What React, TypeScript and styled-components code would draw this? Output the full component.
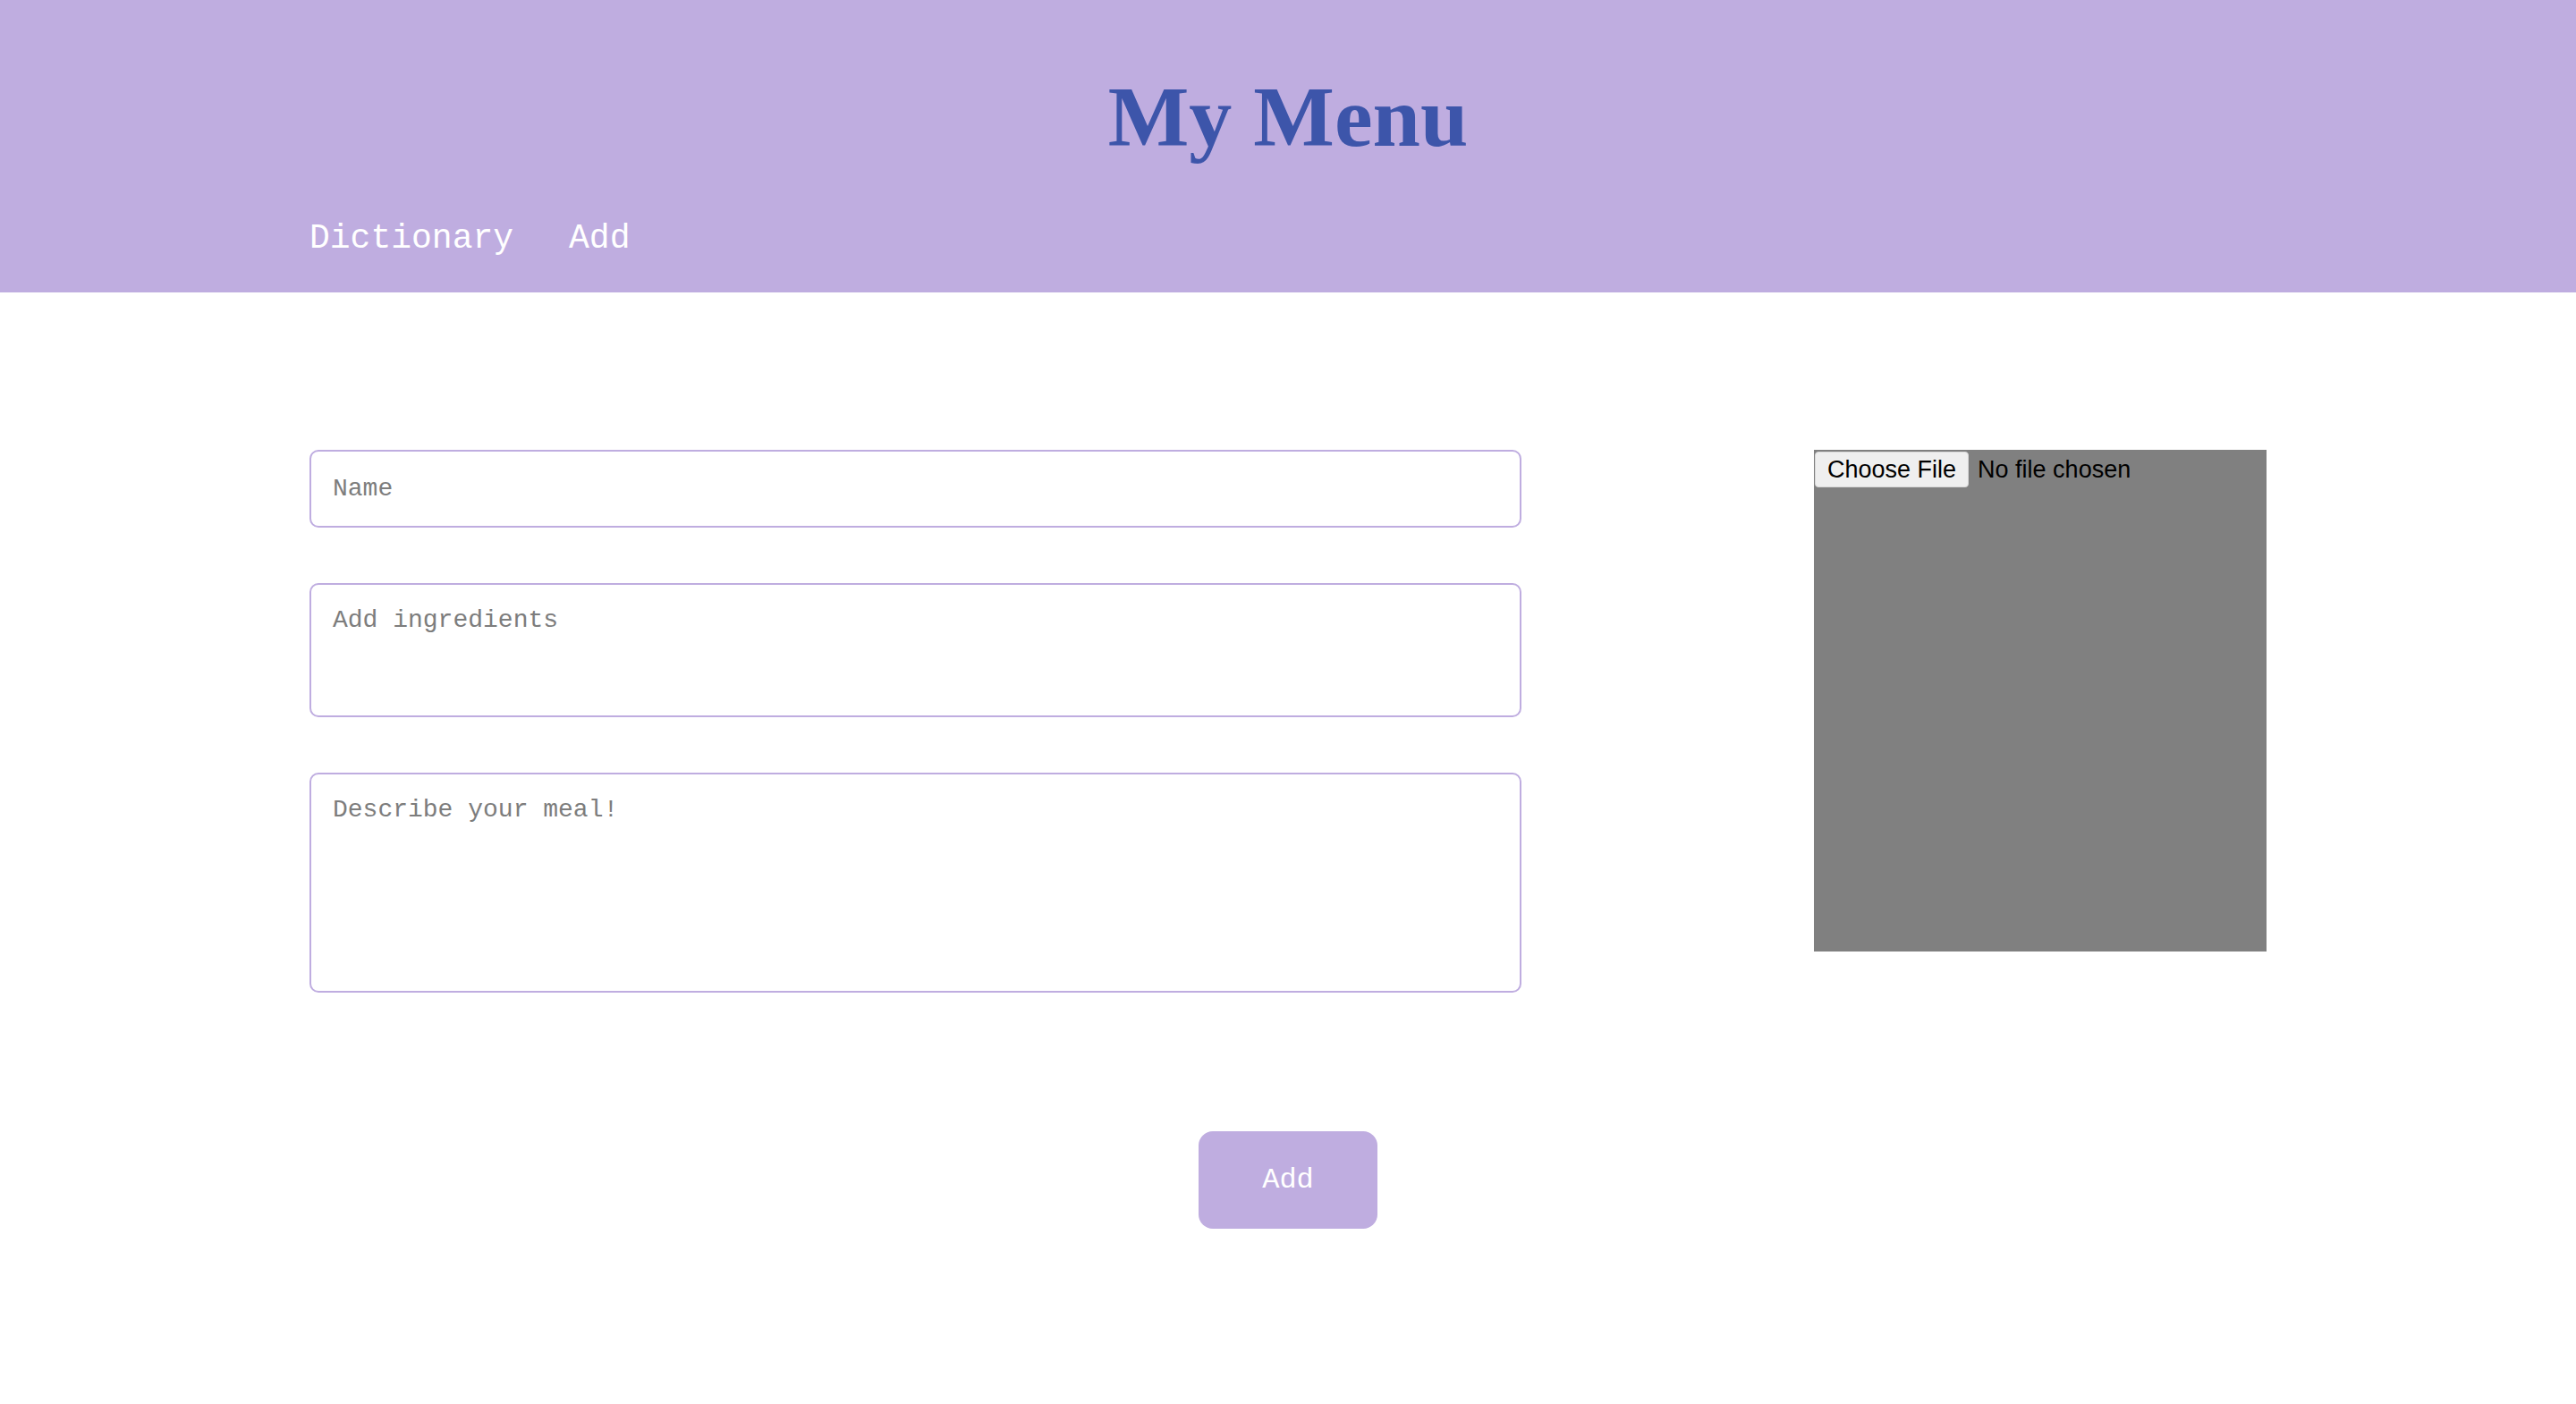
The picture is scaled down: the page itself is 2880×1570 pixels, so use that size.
import React from "react";
import styled, { createGlobalStyle } from "styled-components";

const GlobalStyle = createGlobalStyle`
  html, body {
    margin: 0;
    padding: 0;
    background: #ffffff;
  }
  * { box-sizing: border-box; }
`;

const Header = styled.header`
  background: #bfade0;
  height: 327px;
  padding: 83px 346px 0;
  display: flex;
  flex-direction: column;
`;

const Title = styled.h1`
  margin: 0;
  text-align: center;
  font-family: "Liberation Serif", "Times New Roman", serif;
  font-weight: 700;
  font-size: 96px;
  line-height: 1;
  color: #3d55aa;
`;

const Nav = styled.nav`
  margin-top: 69px;
  display: flex;
  gap: 62px;
`;

const NavLink = styled.a`
  font-family: "Liberation Mono", "Courier New", monospace;
  font-size: 38px;
  line-height: 1;
  color: #ffffff;
  text-decoration: none;
  cursor: pointer;
`;

const Main = styled.main`
  padding: 176px 346px 0;
  display: flex;
  flex-direction: column;
`;

const Row = styled.div`
  display: flex;
  align-items: flex-start;
  justify-content: space-between;
`;

const Form = styled.div`
  width: 1355px;
  display: flex;
  flex-direction: column;
  gap: 62px;
`;

const fieldCss = `
  width: 100%;
  border: 2px solid #bfade0;
  border-radius: 10px;
  padding: 24px 24px;
  font-family: "Liberation Mono", "Courier New", monospace;
  font-size: 28px;
  color: #333;
  background: #fff;
  outline: none;
  &::placeholder { color: #7d7d7d; }
`;

const TextInput = styled.input`
  ${fieldCss}
  height: 87px;
  padding-top: 0;
  padding-bottom: 0;
`;

const TextArea = styled.textarea<{ $h: number }>`
  ${fieldCss}
  height: ${(p) => p.$h}px;
  resize: none;
  display: block;
`;

const ImageBox = styled.div`
  width: 506px;
  height: 561px;
  background: #808080;
  padding: 2px 1px;
`;

const FileInput = styled.input`
  font-family: "Liberation Sans", Arial, sans-serif;
  font-size: 27px;
  color: #000;
  &::file-selector-button {
    font-family: "Liberation Sans", Arial, sans-serif;
    font-size: 27px;
    color: #000;
    background: #efefef;
    border: 1px solid #d8d8d8;
    border-radius: 4px;
    padding: 2px 13px;
    height: 40px;
    margin-right: 10px;
  }
`;

const ButtonRow = styled.div`
  display: flex;
  justify-content: center;
  margin-top: 155px;
`;

const AddButton = styled.button`
  width: 200px;
  height: 109px;
  border: none;
  border-radius: 16px;
  background: #bfade0;
  color: #ffffff;
  font-family: "Liberation Mono", "Courier New", monospace;
  font-size: 32px;
  cursor: pointer;
`;

export default function App() {
  return (
    <>
      <GlobalStyle />
      <Header>
        <Title>My Menu</Title>
        <Nav>
          <NavLink>Dictionary</NavLink>
          <NavLink>Add</NavLink>
        </Nav>
      </Header>
      <Main>
        <Row>
          <Form>
            <TextInput placeholder="Name" />
            <TextArea $h={150} placeholder="Add ingredients" />
            <TextArea $h={246} placeholder="Describe your meal!" />
          </Form>
          <ImageBox>
            <FileInput type="file" />
          </ImageBox>
        </Row>
        <ButtonRow>
          <AddButton>Add</AddButton>
        </ButtonRow>
      </Main>
    </>
  );
}
